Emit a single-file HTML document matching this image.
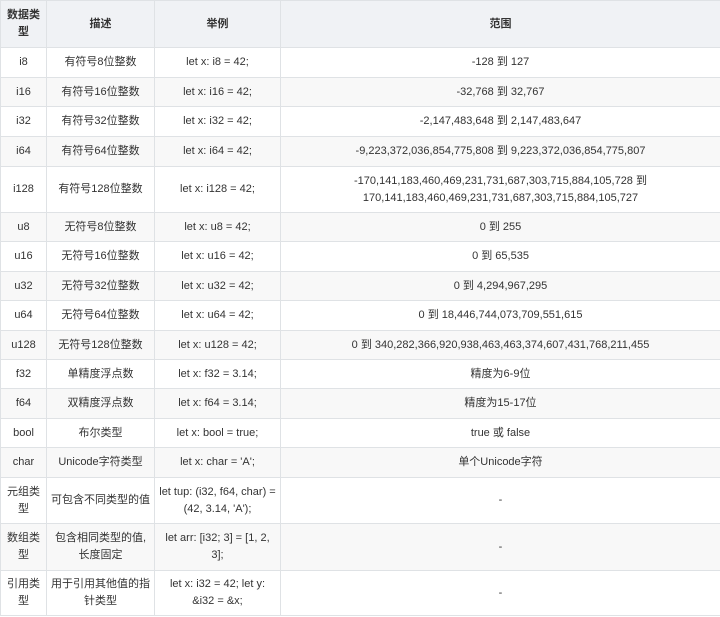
<!DOCTYPE html>
<html><head><meta charset="utf-8"><style>
body{margin:0;background:#fff;}
table{border-collapse:collapse;position:absolute;left:0;top:0;width:720px;table-layout:fixed;font-family:"Liberation Sans","Noto Sans CJK SC",sans-serif;font-size:11px;color:#333;}
td,th{border:1px solid #dfe2e5;text-align:center;padding:0 4px;line-height:17px;}
th{background:#f0f2f5;font-weight:bold;height:46px;}
tr:nth-child(odd) td{background:#f8f8f8;}
tr:nth-child(even) td{background:#fff;}
</style></head><body>
<table>
<colgroup><col style="width:46px"><col style="width:108px"><col style="width:126px"><col style="width:440px"></colgroup>
<tr><th>数据类<br>型</th><th>描述</th><th>举例</th><th>范围</th></tr>
<tr style="height:30px"><td>i8</td><td>有符号8位整数</td><td>let x: i8 = 42;</td><td>-128 到 127</td></tr>
<tr style="height:29px"><td>i16</td><td>有符号16位整数</td><td>let x: i16 = 42;</td><td>-32,768 到 32,767</td></tr>
<tr style="height:30px"><td>i32</td><td>有符号32位整数</td><td>let x: i32 = 42;</td><td>-2,147,483,648 到 2,147,483,647</td></tr>
<tr style="height:30px"><td>i64</td><td>有符号64位整数</td><td>let x: i64 = 42;</td><td>-9,223,372,036,854,775,808 到 9,223,372,036,854,775,807</td></tr>
<tr style="height:46px"><td>i128</td><td>有符号128位整数</td><td>let x: i128 = 42;</td><td>-170,141,183,460,469,231,731,687,303,715,884,105,728 到<br>170,141,183,460,469,231,731,687,303,715,884,105,727</td></tr>
<tr style="height:29px"><td>u8</td><td>无符号8位整数</td><td>let x: u8 = 42;</td><td>0 到 255</td></tr>
<tr style="height:30px"><td>u16</td><td>无符号16位整数</td><td>let x: u16 = 42;</td><td>0 到 65,535</td></tr>
<tr style="height:29px"><td>u32</td><td>无符号32位整数</td><td>let x: u32 = 42;</td><td>0 到 4,294,967,295</td></tr>
<tr style="height:30px"><td>u64</td><td>无符号64位整数</td><td>let x: u64 = 42;</td><td>0 到 18,446,744,073,709,551,615</td></tr>
<tr style="height:29px"><td>u128</td><td>无符号128位整数</td><td>let x: u128 = 42;</td><td>0 到 340,282,366,920,938,463,463,374,607,431,768,211,455</td></tr>
<tr style="height:29px"><td>f32</td><td>单精度浮点数</td><td>let x: f32 = 3.14;</td><td>精度为6-9位</td></tr>
<tr style="height:30px"><td>f64</td><td>双精度浮点数</td><td>let x: f64 = 3.14;</td><td>精度为15-17位</td></tr>
<tr style="height:29px"><td>bool</td><td>布尔类型</td><td>let x: bool = true;</td><td>true 或 false</td></tr>
<tr style="height:30px"><td>char</td><td>Unicode字符类型</td><td>let x: char = 'A';</td><td>单个Unicode字符</td></tr>
<tr style="height:46px"><td>元组类<br>型</td><td>可包含不同类型的值</td><td>let tup: (i32, f64, char) =<br>(42, 3.14, 'A');</td><td>-</td></tr>
<tr style="height:47px"><td>数组类<br>型</td><td>包含相同类型的值,<br>长度固定</td><td>let arr: [i32; 3] = [1, 2,<br>3];</td><td>-</td></tr>
<tr style="height:45px"><td>引用类<br>型</td><td>用于引用其他值的指<br>针类型</td><td>let x: i32 = 42; let y:<br>&amp;i32 = &amp;x;</td><td>-</td></tr>
</table>
</body></html>
